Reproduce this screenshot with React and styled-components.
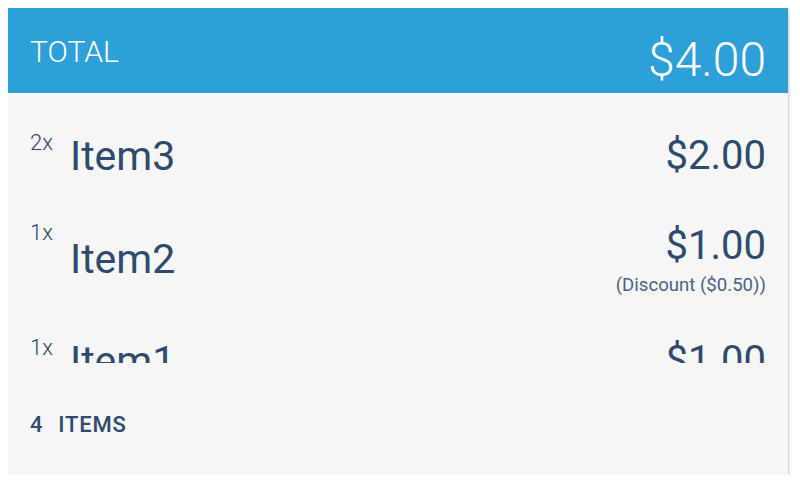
import React from "react";
import styled, { createGlobalStyle } from "styled-components";

const GlobalStyle = createGlobalStyle`
  body {
    margin: 8px;
    background: #ffffff;
    font-family: Roboto, "Liberation Sans", sans-serif;
  }
`;

const Card = styled.div`
  width: 780px;
  height: 467px;
  display: flex;
  flex-direction: column;
  background-color: #f6f6f6;
  box-shadow: 0 1px 3px rgba(0, 0, 0, 0.3), 0 2px 8px rgba(0, 0, 0, 0.08);
  color: #2e4a6c;
`;

const Header = styled.div`
  height: 85px;
  flex: none;
  display: flex;
  justify-content: space-between;
  align-items: flex-start;
  padding: 0 22px;
  background-color: #2d9fd9;
  color: #ffffff;
  box-sizing: border-box;
`;

const HeaderTitle = styled.div`
  margin-top: 26px;
  font-size: 30px;
  font-weight: 300;
`;

const HeaderAmount = styled.div`
  margin-top: 23px;
  font-size: 48px;
  font-weight: 300;
`;

const List = styled.div`
  height: 270px;
  flex: none;
  overflow: hidden;
  padding-top: 18px;
  box-sizing: border-box;
`;

const Row = styled.div`
  display: flex;
  justify-content: space-between;
  align-items: center;
  padding: 21px 22px;
`;

const Left = styled.div`
  display: flex;
  align-items: center;
  align-self: stretch;
`;

const Qty = styled.div`
  align-self: flex-start;
  font-size: 22px;
  font-weight: 300;
  line-height: 1;
  width: 40px;
`;

const Name = styled.div`
  font-size: 41px;
  line-height: 48px;
`;

const Right = styled.div`
  display: flex;
  flex-direction: column;
  align-items: flex-end;
`;

const Price = styled.div`
  font-size: 40px;
  line-height: 48px;
`;

const Discount = styled.div`
  margin-top: 5px;
  font-size: 18.6px;
  line-height: 20px;
  color: #4a6384;
`;

const Footer = styled.div`
  flex: 1;
  display: flex;
  align-items: flex-start;
  padding: 49px 22px 0;
  font-size: 22px;
  font-weight: 500;
  letter-spacing: 0.8px;
`;

const Count = styled.span`
  margin-right: 15px;
`;

const items = [
  { name: "Item3", qty: 2, price: "$2.00" },
  { name: "Item2", qty: 1, price: "$1.00", discount: "(Discount ($0.50))" },
  { name: "Item1", qty: 1, price: "$1.00" }
];

export default function App() {
  return (
    <>
      <GlobalStyle />
      <Card>
        <Header>
          <HeaderTitle>TOTAL</HeaderTitle>
          <HeaderAmount>$4.00</HeaderAmount>
        </Header>
        <List>
          {items.map((item, key) => (
            <Row key={key}>
              <Left>
                <Qty>{item.qty}x</Qty>
                <Name>{item.name}</Name>
              </Left>
              <Right>
                <Price>{item.price}</Price>
                {item.discount ? <Discount>{item.discount}</Discount> : null}
              </Right>
            </Row>
          ))}
        </List>
        <Footer>
          <Count>4</Count>
          <span>ITEMS</span>
        </Footer>
      </Card>
    </>
  );
}
